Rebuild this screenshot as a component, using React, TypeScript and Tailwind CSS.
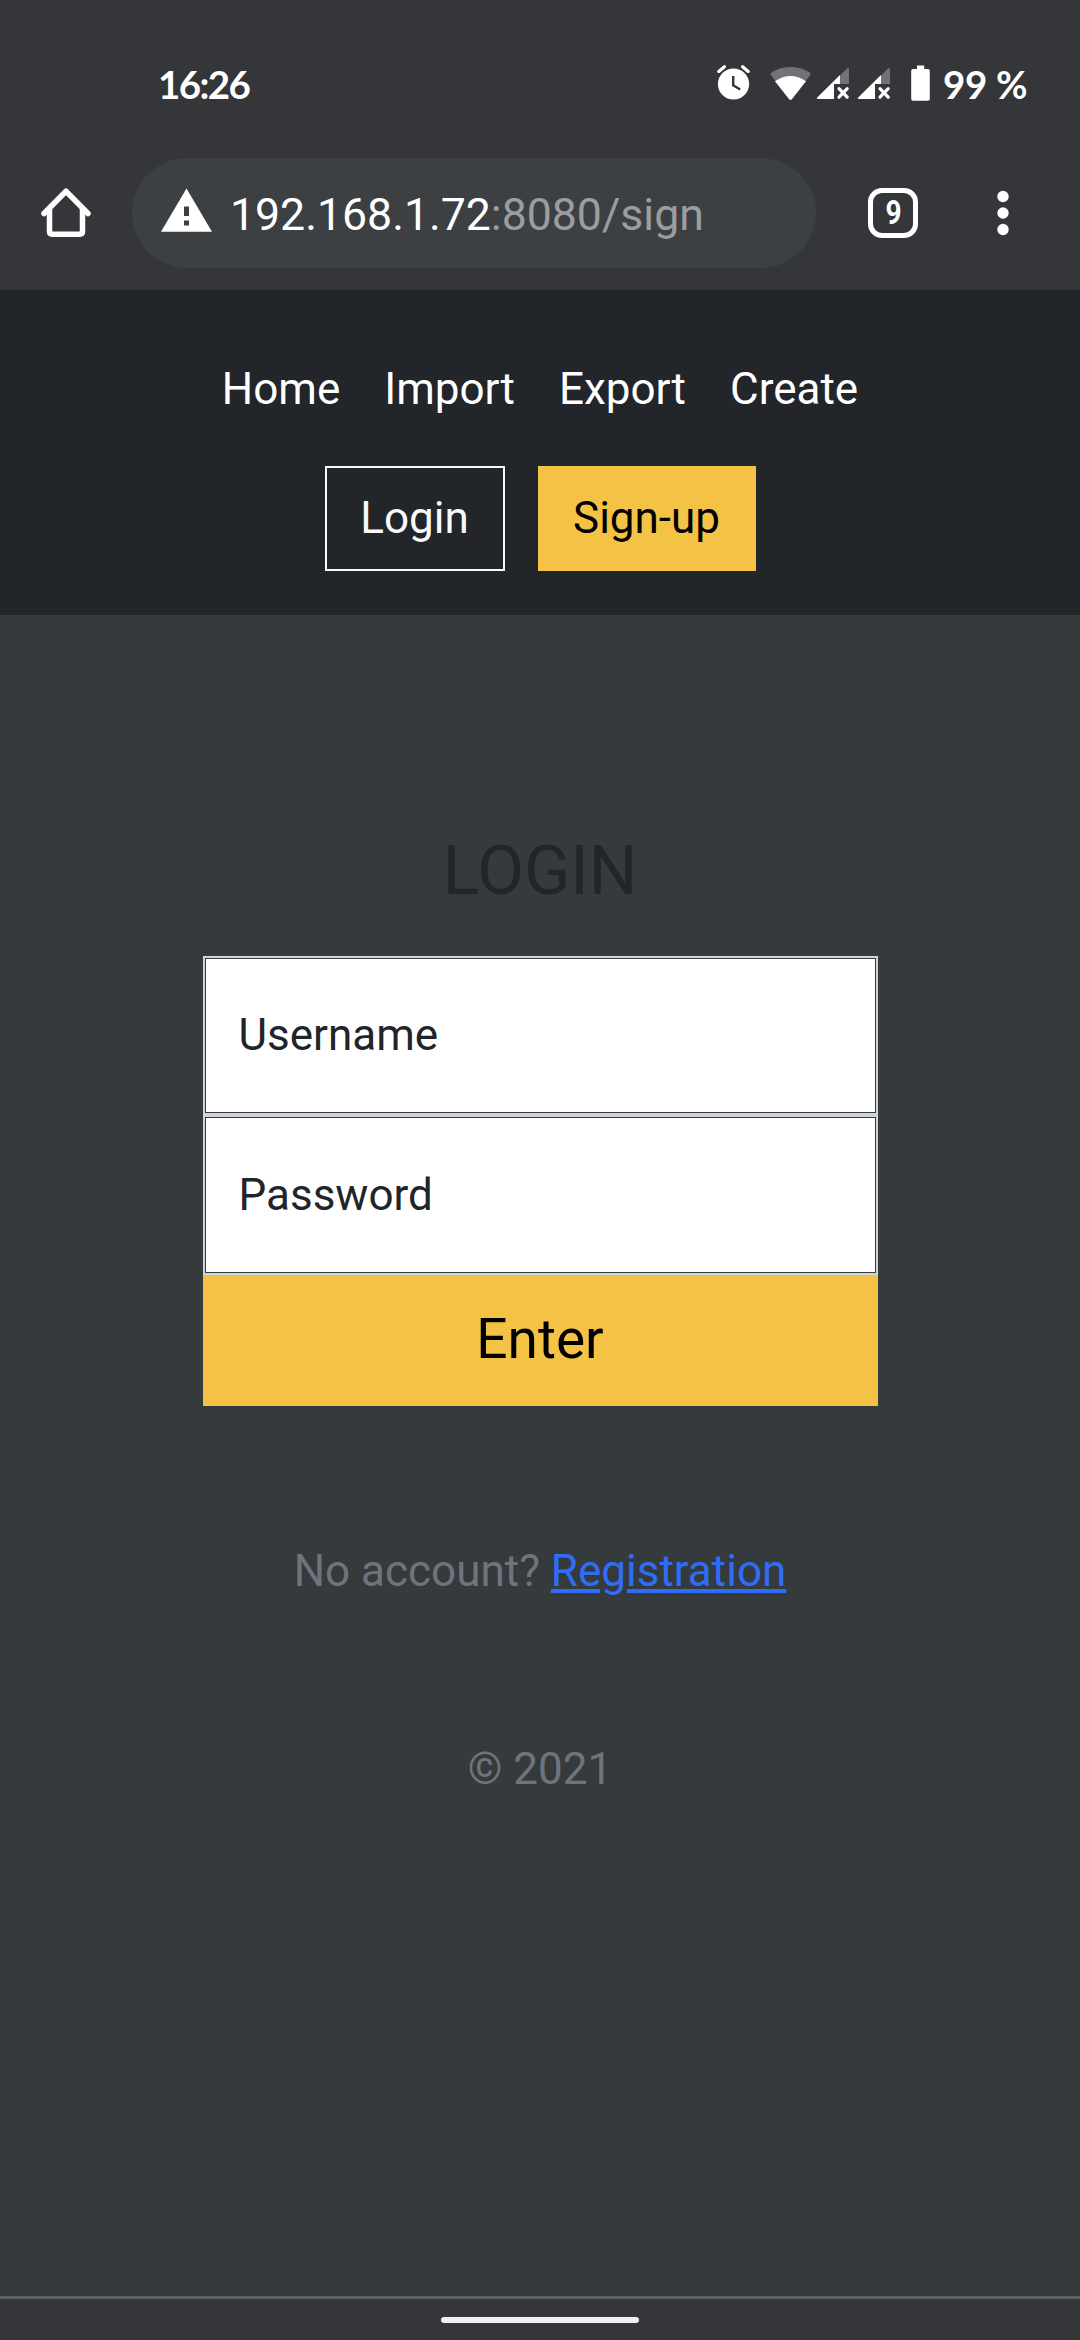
import React from "react";

function Signal() {
  return (
    <svg width="34" height="36" viewBox="0 0 34 36" className="block">
      <path d="M24 10.5 31 3.6Q33 2 33 4.4V19H24Z" fill="#727377" />
      <path d="M24 10v9h-6v15H2Q0 34 1.2 32.6Z" fill="#fff" />
      <path d="m23 23.6 8.2 8.6M31.2 23.6 23 32.2" stroke="#fff" strokeWidth="3.2" strokeLinecap="round" />
    </svg>
  );
}

function StatusBar() {
  return (
    <div className="flex h-[158px] items-start pt-[65px] pl-[158px] font-['Lato'] text-[38.5px] leading-[40px] font-bold text-white">
      <span className="-mt-px w-[559px] tracking-[-1.6px]">16:26</span>
      <svg width="34" height="36" viewBox="0 0 34 36" className="block">
        <circle cx="16.5" cy="19" r="15.6" fill="#fff" />
        <path d="M1.8 6.4 7.4 1.8M25.6 1.8l5.6 4.6" stroke="#fff" strokeWidth="3.2" strokeLinecap="round" />
        <path d="M16.2 11v9.3l7 4.2" fill="none" stroke="#35363a" strokeWidth="2.4" />
      </svg>
      <svg width="42" height="36" viewBox="0 0 42 36" className="ml-[19px] block">
        <path d="M.5 9.6Q0 8.4 1.4 7.4 20.500-3.400 39.800 7.400 41.200 8.400 40.500 9.600L21.800 34.200Q20.500 35.500 19.200 34.200Z" fill="#727377" />
        <path d="M5 16.200Q20.500 5.800 36 16.200L21.800 34.200Q20.500 35.500 19.200 34.200Z" fill="#fff" />
      </svg>
      <div className="ml-[4px] flex gap-[7px]">
        <Signal />
        <Signal />
      </div>
      <svg width="20" height="36" viewBox="0 0 20 36" className="ml-[20px] block">
        <path d="M6 0.500h7.200V4H17Q18.800 4 18.800 5.800V34Q18.800 35.800 17 35.800H2Q.2 35.800.2 34V5.800Q.2 4 2 4H6Z" fill="#fff" />
      </svg>
      <span className="-mt-px ml-[12px] whitespace-nowrap tracking-[-0.300px]">99 %</span>
    </div>
  );
}

function Toolbar() {
  return (
    <div className="flex h-[132px] items-start">
      <svg width="52" height="52" viewBox="0 0 52 52" className="ml-[40px] mt-[29px] block" fill="none" stroke="#fff" strokeWidth="5.500" strokeLinejoin="round" strokeLinecap="round">
        <path d="M4 26.500 26 4.200 48 26.500" />
        <path d="M9.500 22V44.500Q9.500 47.200 12.200 47.200H39.800Q42.500 47.200 42.500 44.500V22" />
      </svg>
      <div className="ml-[40px] flex h-[110px] w-[684px] items-start rounded-full bg-[#3c4043] pl-[29px]">
        <svg width="52" height="44" viewBox="0 0 52 44" className="mt-[30px] block">
          <path d="M25.500.5 51 43.700H0Z" fill="#fff" />
          <path d="M23 18.500h5v9.500h-5zM23 32.500h5v5h-5z" fill="#3c4043" />
        </svg>
        <span className="ml-[17px] mt-[24px] whitespace-nowrap text-[44.600px] leading-[66px] text-white">
          192.168.1.72<span className="text-[#9b9d9f]">:8080/sign</span>
        </span>
      </div>
      <div className="ml-[52px] mt-[30px] flex h-[50px] w-[50px] items-center justify-center rounded-[14px] border-[5.500px] border-white text-[33px] leading-none font-bold text-white">
        <span className="-mt-px scale-x-85">9</span>
      </div>
      <svg width="14" height="52" viewBox="0 0 14 52" className="ml-[78px] mt-[29px] block" fill="#fff">
        <circle cx="7" cy="9.500" r="5.700" />
        <circle cx="7" cy="26" r="5.700" />
        <circle cx="7" cy="42.500" r="5.700" />
      </svg>
    </div>
  );
}

export default function App() {
  return (
    <div className="flex h-[2340px] w-[1080px] flex-col overflow-hidden bg-[#353a3e] font-['Roboto',sans-serif] text-[44px] leading-[66px]">
      <div className="bg-[#35363a]">
        <StatusBar />
        <Toolbar />
      </div>
      <header className="h-[325px] bg-[#222529] pt-[66px] text-white">
        <nav className="flex justify-center gap-[44px]">
          <a>Home</a>
          <a>Import</a>
          <a>Export</a>
          <a>Create</a>
        </nav>
        <div className="mt-[44px] flex justify-center gap-[33px]">
          <button className="h-[105px] w-[180px] border-2 border-[#f8f9fa] pb-[2px] text-[#f8f9fa]">Login</button>
          <button className="h-[105px] w-[218px] bg-[#f4c244] pb-[2px] text-black">Sign-up</button>
        </div>
      </header>
      <main className="flex flex-1 flex-col items-center bg-[#353a3d]">
        <h1 className="mt-[215px] text-[68px] leading-[82px] text-[#222529]">LOGIN</h1>
        <form className="mt-[44px] w-[675px] text-[#212529]">
          <div className="border-2 border-[#ced4da]">
            <div className="flex h-[155px] items-center border border-[#343a3e] bg-white pb-px pl-[33px]">Username</div>
          </div>
          <div className="border-2 border-[#ced4da]">
            <div className="flex h-[156px] items-center border border-[#343a3e] bg-white pl-[33px]">Password</div>
          </div>
          <button type="button" className="block h-[131px] w-full bg-[#f4c244] pb-[4px] text-[55px] text-black">
            Enter
          </button>
        </form>
        <p className="mt-[132px] text-[#6f747c]">
          No account? <a className="text-[#306df6] underline">Registration</a>
        </p>
        <p className="mt-[132px] text-[#6f747c]">© 2021</p>
      </main>
      <footer className="flex h-[44px] justify-center border-t-[3px] border-[#5f6064] bg-[#35363a] pt-[18px]">
        <div className="h-[6px] w-[198px] rounded-full bg-[#f0f0f0]" />
      </footer>
    </div>
  );
}
